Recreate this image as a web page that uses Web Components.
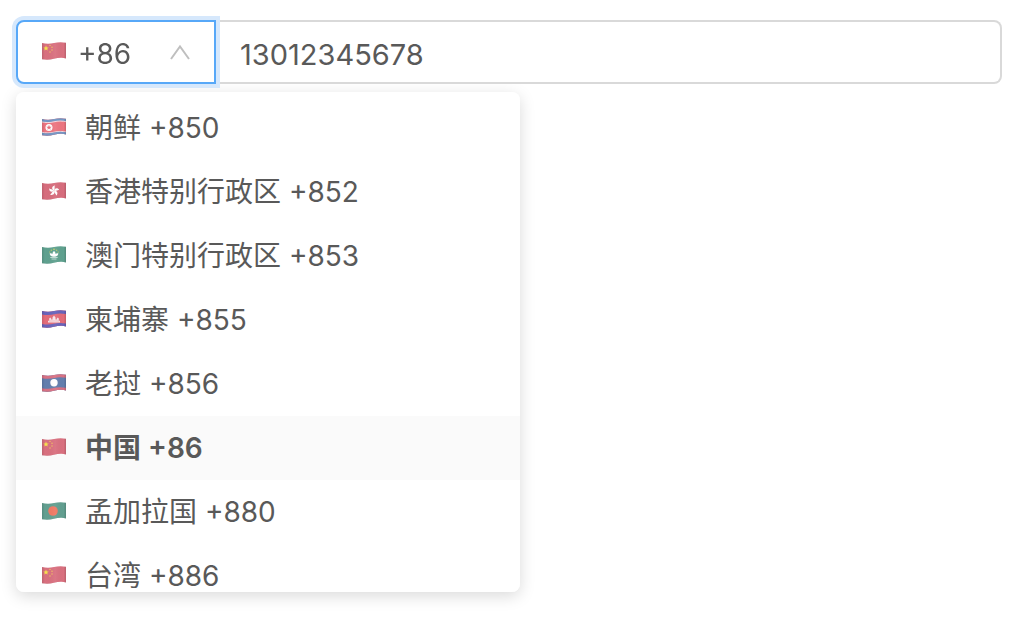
<!DOCTYPE html>
<html lang="zh-CN">
<head>
<meta charset="utf-8">
<meta name="viewport" content="width=device-width, initial-scale=1">
<title>手机号码</title>
<style>
  body {
    box-sizing: border-box;
    min-height: 100vh;
    margin: 0;
    padding: 20px 24px 20px 16px;
    background: #fff;
    color: #595959;
    font: 28px/64px Inter, "Noto Sans CJK SC", sans-serif;
  }
</style>
</head>
<body>
<phone-field>
  <country-select slot="prefix" flag="cn"></country-select>
  <country-menu slot="menu">
    <country-option flag="kp">朝鲜 +850</country-option>
    <country-option flag="hk">香港特别行政区 +852</country-option>
    <country-option flag="mo">澳门特别行政区 +853</country-option>
    <country-option flag="kh">柬埔寨 +855</country-option>
    <country-option flag="la">老挝 +856</country-option>
    <country-option flag="cn" selected>中国 +86</country-option>
    <country-option flag="bd">孟加拉国 +880</country-option>
    <country-option flag="cn">台湾 +886</country-option>
  </country-menu>
</phone-field>

<script>
const wave = (y, color, width) =>
  `<path d="M-1 ${y} C4 ${y + 1} 8 ${y + 1} 12 ${y} S20 ${y - 1} 25 ${y}" fill="none" stroke="${color}" stroke-width="${width}"/>`;

const petal = angle =>
  `<path d="M0 0C-3-1.5-2-5 1-5.2 0-3.8 1.4-2.3 0 0z" transform="rotate(${angle})"/>`;

const FLAGS = {
  cn: `<rect width="24" height="18" fill="#d9707f"/>
    <path d="M4 3.6l.8 1.8 1.9.1-1.5 1.2.5 1.9L4 7.600l-1.700 1 .5-1.900-1.500-1.200 1.900-.1z" fill="#f7e34d"/>
    <g fill="#f2c75e"><circle cx="8" cy="3.4" r=".7"/><circle cx="10" cy="5.3" r=".7"/><circle cx="10" cy="8" r=".7"/><circle cx="8" cy="10" r=".7"/></g>`,
  kp: `<rect width="24" height="18" fill="#ec7580"/>
    ${wave(2, '#7496c4', 3)}${wave(3.8, '#f1dce2', 1)}${wave(14.2, '#f1dce2', 1)}${wave(16, '#7496c4', 3)}
    <circle cx="7" cy="9.5" r="3.5" fill="#fff"/>
    <path d="M7 6.8l.7 1.9h2L8.1 9.9l.6 1.9L7 10.6l-1.7 1.2.6-1.9-1.6-1.2h2z" fill="#e76c78"/>`,
  hk: `<rect width="24" height="18" fill="#d76d7d"/>
    <g fill="#fff" transform="translate(12 8.8)">${[0, 72, 144, 216, 288].map(petal).join('')}</g>`,
  mo: `<rect width="24" height="18" fill="#5fa18f"/>
    <g fill="#d5d75d"><circle cx="12" cy="3.2" r=".8"/><circle cx="9.3" cy="4.2" r=".6"/><circle cx="14.7" cy="4.2" r=".6"/><circle cx="7.8" cy="6" r=".6"/><circle cx="16.2" cy="6" r=".6"/></g>
    <path d="M12 5c1.2 1 1.6 2 1.5 3 .8-.8 1.7-1 2.8-.7 0 2-1.2 3.4-4.3 3.4S7.7 9.3 7.7 7.3c1.1-.3 2-.1 2.8.7-.1-1 .3-2 1.5-3z" fill="#fff"/>
    <path d="M8.3 11.5h7.4M9.5 13h5" stroke="#d4e8e2" stroke-width=".8"/>`,
  kh: `<rect width="24" height="18" fill="#e46c79"/>
    ${wave(2.2, '#6964bb', 4)}${wave(15.8, '#6964bb', 4)}
    <path d="M6 12.5v-1.7h1.2V8.6l1-1.1 1 1.1v1h1.3V7.5L12 5.6l1.5 1.9v2.1h1.3v-1l1-1.1 1 1.1v2.2H18v1.7z" fill="#f8e5e9"/>
    <path d="M7 11h10" stroke="#e9929d" stroke-width=".5"/>`,
  la: `<rect width="24" height="18" fill="#637fae"/>
    ${wave(2, '#d87284', 4)}${wave(16, '#d87284', 4)}
    <circle cx="12" cy="8.8" r="3.7" fill="#fff"/>`,
  bd: `<rect width="24" height="18" fill="#629f90"/>
    <circle cx="11" cy="9" r="4.8" fill="#ee7964"/>`
};

customElements.define('country-flag', class extends HTMLElement {
  connectedCallback() {
    if (this.shadowRoot) return;
    this.attachShadow({ mode: 'open' }).innerHTML = `
      <style>
        :host { display: block; flex: none; width: 24px; height: 18px; }
        svg { display: block; width: 100%; height: 100%; }
      </style>
      <svg viewBox="0 0 24 18" aria-hidden="true">
        <defs>
          <clipPath id="cloth"><path d="M0 1C4 2 8 2 12 1S20-.2 24 .8V16.4C20 15.4 16 15.8 12 16.8S4 18 0 17.2Z"/></clipPath>
          <linearGradient id="fold">
            <stop offset="0" stop-color="#000" stop-opacity=".12"/>
            <stop offset=".12" stop-color="#000" stop-opacity="0"/>
            <stop offset=".55" stop-color="#fff" stop-opacity=".05"/>
            <stop offset=".9" stop-color="#000" stop-opacity="0"/>
            <stop offset="1" stop-color="#000" stop-opacity=".15"/>
          </linearGradient>
        </defs>
        <g clip-path="url(#cloth)">
          ${FLAGS[this.getAttribute('name')]}
          <rect width="24" height="18" fill="url(#fold)"/>
          ${wave(17.3, 'rgba(0,0,0,.1)', 1)}
        </g>
      </svg>`;
  }
});

customElements.define('country-select', class extends HTMLElement {
  connectedCallback() {
    if (this.shadowRoot) return;
    this.attachShadow({ mode: 'open' }).innerHTML = `
      <style>
        :host {
          display: flex; align-items: center; box-sizing: border-box;
          width: 200px; height: 64px; padding: 0 23px 0 24px;
          border: 2px solid #57a8f8; border-radius: 8px 0 0 8px;
          box-shadow: 0 0 0 4px #d6e8fc; background: #fff;
        }
        country-flag { margin-bottom: 2px; }
        select {
          appearance: none; flex: 1; min-width: 0; height: 58px; margin: 0 0 2px; padding: 0 0 0 12px;
          border: 0; outline: 0; background: none; color: inherit; font: inherit;
        }
        .arrow { flex: none; width: 22px; height: 16px; }
      </style>
      <country-flag name="${this.getAttribute('flag')}"></country-flag>
      <select aria-label="国家或地区代码"><option>+86</option></select>
      <svg class="arrow" viewBox="0 0 22 16" aria-hidden="true">
        <path d="M2 15L11 2.5 20 15" fill="none" stroke="#bfbfbf" stroke-width="2"/>
      </svg>`;
  }
});

customElements.define('country-option', class extends HTMLElement {
  connectedCallback() {
    if (this.shadowRoot) return;
    this.setAttribute('role', 'option');
    this.setAttribute('aria-selected', this.hasAttribute('selected'));
    this.attachShadow({ mode: 'open' }).innerHTML = `
      <style>
        :host {
          display: flex; align-items: center; gap: 19px;
          height: 64px; padding: 0 26px; white-space: nowrap; cursor: pointer;
        }
        :host([selected]) { background: #fafafa; font-weight: 600; }
        country-flag { margin-bottom: 2px; }
      </style>
      <country-flag name="${this.getAttribute('flag')}"></country-flag>
      <span><slot></slot></span>`;
  }
});

customElements.define('country-menu', class extends HTMLElement {
  connectedCallback() {
    if (this.shadowRoot) return;
    this.setAttribute('role', 'listbox');
    this.setAttribute('aria-label', '国家或地区');
    this.attachShadow({ mode: 'open' }).innerHTML = `
      <style>
        :host {
          display: block; box-sizing: border-box; max-width: 504px; max-height: 500px;
          margin-top: 8px; padding: 4px 0; overflow-y: auto; scrollbar-width: none;
          border-radius: 8px; background: #fff; box-shadow: 0 4px 16px rgba(0, 0, 0, .15);
        }
      </style>
      <slot></slot>`;
  }
});

customElements.define('phone-field', class extends HTMLElement {
  connectedCallback() {
    if (this.shadowRoot) return;
    this.attachShadow({ mode: 'open' }).innerHTML = `
      <style>
        :host { display: block; }
        .group { display: flex; }
        ::slotted([slot="prefix"]) { flex: none; position: relative; z-index: 1; }
        input {
          flex: 1; min-width: 0; box-sizing: border-box; height: 64px; margin: 0;
          padding: 4px 24px 0; border: 2px solid #d9d9d9; border-left: 0;
          border-radius: 0 8px 8px 0; outline: 0; background: #fff; color: inherit; font: inherit;
          font-size: 29px; line-height: 56px;
        }
      </style>
      <div class="group">
        <slot name="prefix"></slot>
        <input type="tel" value="13012345678" aria-label="手机号码">
      </div>
      <slot name="menu"></slot>`;
  }
});
</script>
</body>
</html>
